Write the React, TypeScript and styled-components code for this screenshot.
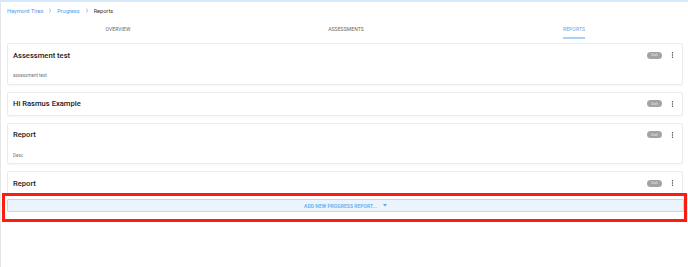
import React from 'react';
import styled, { createGlobalStyle } from 'styled-components';

const GlobalStyle = createGlobalStyle`
  html, body {
    margin: 0;
    padding: 0;
    background: #ffffff;
    font-family: Roboto, "Liberation Sans", Arial, sans-serif;
  }
`;

const Page = styled.div`
  height: 267px;
  border-top: 2px solid #d6e9fb;
  border-left: 1px solid #e6e6e6;
  box-sizing: border-box;
  background: #fff;
`;

const Breadcrumbs = styled.nav`
  display: flex;
  align-items: center;
  gap: 5px;
  height: 17px;
  padding: 0 0 0 6px;
  font-size: 5.6px;
`;

const Crumb = styled.span<{ active?: boolean }>`
  color: ${(p) => (p.active ? '#333' : '#4f9be8')};
`;

const Chevron = styled.svg`
  width: 4px;
  height: 5px;
`;

const Tabs = styled.div`
  display: grid;
  grid-template-columns: repeat(3, 1fr);
  padding-left: 3px;
  height: 20px;
`;

const Tab = styled.div<{ active?: boolean }>`
  display: flex;
  justify-content: center;
  align-items: center;
  font-size: 5px;
  letter-spacing: 0.1px;
  color: ${(p) => (p.active ? '#58a7ee' : '#666')};
`;

const TabLabel = styled.span<{ active?: boolean }>`
  padding: 6px 0 5px;
  border-bottom: 2px solid ${(p) => (p.active ? '#a9d0f5' : 'transparent')};
`;

const List = styled.div`
  display: flex;
  flex-direction: column;
  gap: 7px;
  padding: 4px 5px 0 6px;
`;

const Card = styled.div<{ clipped?: boolean }>`
  border: 1px solid #ececec;
  border-bottom: ${(p) => (p.clipped ? 'none' : '1px solid #ececec')};
  border-radius: 2px;
  box-shadow: 0 1px 2px rgba(0, 0, 0, 0.04);
  padding: 0 8px 0 5px;
  background: #fff;
`;

const CardHead = styled.div`
  display: flex;
  align-items: center;
  height: 22px;
`;

const Title = styled.div`
  flex: 1;
  font-size: 7.6px;
  font-weight: 500;
  color: #1a1a1a;
`;

const Chip = styled.span`
  display: inline-flex;
  align-items: center;
  justify-content: center;
  width: 15px;
  height: 7px;
  border-radius: 4px;
  background: #a3a3a3;
  color: #e8e8e8;
  font-size: 3px;
  margin-right: 9px;
`;

const Dots = styled.svg`
  width: 3px;
  height: 6px;
`;

const Desc = styled.div`
  font-size: 4.6px;
  color: #777;
  padding: 7px 0 5.5px;
`;

const Highlight = styled.div`
  position: relative;
  border: 3px solid #fe1b10;
  margin: -1px 1px 0 1px;
  padding: 3px 0 7px 2px;
  background: #fff;
`;

const AddButton = styled.button`
  display: flex;
  width: 100%;
  height: 13px;
  align-items: center;
  justify-content: center;
  gap: 6px;
  padding: 0;
  background: #ebf3fc;
  border: 1px solid #bcd8f3;
  border-radius: 1px;
  color: #5aa6ee;
  font-family: Roboto, "Liberation Sans", Arial, sans-serif;
  font-size: 4.9px;
  font-weight: 500;
  letter-spacing: 0.1px;
`;

const Caret = styled.svg`
  width: 4px;
  height: 3px;
`;

interface Report {
  title: string;
  desc?: string;
}

const reports: Report[] = [
  { title: 'Assessment test', desc: 'assessment test' },
  { title: 'Hi Rasmus Example' },
  { title: 'Report', desc: 'Desc' },
  { title: 'Report' },
];

const MoreIcon = () => (
  <Dots viewBox="0 0 3 6">
    <circle cx="1.5" cy="0.8" r="0.7" fill="#444" />
    <circle cx="1.5" cy="3" r="0.7" fill="#444" />
    <circle cx="1.5" cy="5.2" r="0.7" fill="#444" />
  </Dots>
);

const Sep = () => (
  <Chevron viewBox="0 0 4 5">
    <path d="M1 0.6 L3 2.5 L1 4.4" fill="none" stroke="#7fb2e6" strokeWidth="0.8" />
  </Chevron>
);

const App = () => {
  return (
    <>
      <GlobalStyle />
      <Page>
        <Breadcrumbs>
          <Crumb>Haymont Tires</Crumb>
          <Sep />
          <Crumb>Progress</Crumb>
          <Sep />
          <Crumb active>Reports</Crumb>
        </Breadcrumbs>
        <Tabs>
          <Tab>
            <TabLabel>OVERVIEW</TabLabel>
          </Tab>
          <Tab>
            <TabLabel>ASSESSMENTS</TabLabel>
          </Tab>
          <Tab active>
            <TabLabel active>REPORTS</TabLabel>
          </Tab>
        </Tabs>
        <List>
          {reports.map((r, i) => (
            <Card key={i} clipped={i === reports.length - 1}>
              <CardHead>
                <Title>{r.title}</Title>
                <Chip>Draft</Chip>
                <MoreIcon />
              </CardHead>
              {r.desc && <Desc>{r.desc}</Desc>}
            </Card>
          ))}
        </List>
        <Highlight>
          <AddButton>
            ADD NEW PROGRESS REPORT...
            <Caret viewBox="0 0 4 3">
              <path d="M0 0 L4 0 L2 2.5 Z" fill="#5aa6ee" />
            </Caret>
          </AddButton>
        </Highlight>
      </Page>
    </>
  );
};

export default App;
